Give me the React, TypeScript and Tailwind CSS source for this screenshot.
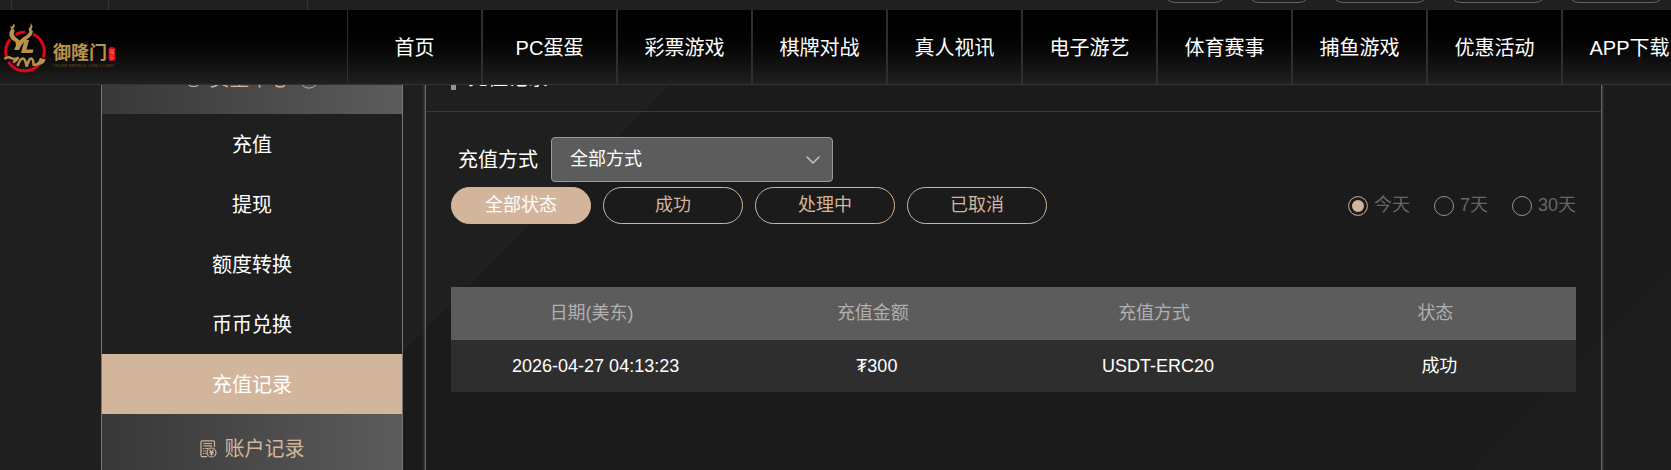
import React, { useState } from 'react';
import { CircleChevronUp, ChevronDown, CircleDollarSign } from 'lucide-react';

const navItems = ['首页', 'PC蛋蛋', '彩票游戏', '棋牌对战', '真人视讯', '电子游艺', '体育赛事', '捕鱼游戏', '优惠活动', 'APP下载'];
const fundItems = ['充值', '提现', '额度转换', '币币兑换', '充值记录'];
const statuses = ['全部状态', '成功', '处理中', '已取消'];
const ranges = ['今天', '7天', '30天'];
const records = [
  { date: '2026-04-27 04:13:23', amount: '₮300', method: 'USDT-ERC20', status: '成功' },
];

const Logo: React.FC = () => (
  <svg width="120" height="60" viewBox="0 0 120 60" fill="none" aria-label="御隆门">
    {/* broken red ring */}
    <g stroke="#e0061a" strokeWidth="3">
      <path d="M15.500 16.500A19.300 19.300 0 0 1 25 14.200" />
      <path d="M33 16A19.300 19.300 0 0 1 43.300 39.500" />
      <path d="M10 21.500A19.300 19.300 0 0 0 6.500 39" />
      <path d="M8.500 44A19.300 19.300 0 0 0 39.500 46" />
    </g>
    {/* dragon monogram */}
    <g fill="#b9934c">
      <path d="M14 5.500L15 8L13.200 10.500L14.600 13L13.600 16L15.500 19L19.500 22.500L22.500 20L27.500 16.500L29.300 14L28.600 11L30.500 8L31 5L32.600 8.500L31.400 11.500L33 13.500L31.500 17.500L28 20.500L24 24L21 28L19 32L14 32L16 27.500L15.500 24L11.500 21.500L9.300 17.500L9.500 14L11.300 11L10 8.500L12.300 8.500Z" />
      <path d="M24.500 22L29 22L26.500 31.500L33.500 31.500L32.500 35L21 35Z" />
    </g>
    <path d="M4.500 41Q8 38 11 40T18.500 39.500Q16 43 13 44.500M17.500 48Q20.500 40 23 40.500T26.500 48.500Q29.500 39.500 31.500 40.500T33.500 46.500Q38 48 40.500 42M39 45.500Q43 45.500 44.500 41M39.500 41L43 42.500" stroke="#b9934c" strokeWidth="2.500" />
    <text x="53" y="41" fontSize="18" fontWeight="700" fill="#b9934c">御隆门</text>
    <text x="53" y="49" fontSize="4" fill="#6b5730" fontFamily="Liberation Serif, serif">GRAND IMPERIAL GATE CASINO</text>
    <rect x="108.500" y="29" width="6.500" height="14" rx="2.500" fill="#e0061a" />
    <text x="109.500" y="35" fontSize="5" fill="#d99a72">娱</text>
    <text x="109.500" y="41" fontSize="5" fill="#d99a72">乐</text>
  </svg>
);

const RecordIcon: React.FC = () => (
  <svg width="17" height="18" viewBox="0 0 17 18" fill="none" stroke="#d2b59b" strokeWidth="1.200">
    <path d="M7 16.700H2.200Q1 16.700 1 15.500V2Q1 .8 2.200 .8H13.300Q14.500 .8 14.500 2V7" />
    <path d="M3.500 3.500H12M3.500 5.800H12M3 8.500H4.500M5.500 8.500H8M3 11H4.500M5.200 11H6.500M3 13.500H4.500M5.200 13.500H6.500" />
    <circle cx="11.500" cy="12.500" r="4.500" />
    <path d="M9.500 9.800L11.500 12.200L13.500 9.800M11.500 12.200V15.500M9.500 12.400H13.500M9.500 14H13.500" />
  </svg>
);

const App: React.FC = () => {
  const [active, setActive] = useState('充值记录');
  const [status, setStatus] = useState('全部状态');
  const [range, setRange] = useState('今天');

  return (
    <div className="h-screen overflow-hidden bg-[linear-gradient(135deg,#1f1f1f_534px,#1b1b1b_534px,#1b1b1b_1374px,#1d1d1d_1374px)] font-['Liberation_Sans','Noto_Sans_CJK_SC',sans-serif] text-white">
      <header className="relative z-10">
        {/* Utility bar */}
        <div className="flex h-[10px] items-end justify-between overflow-hidden bg-[#202020] pr-[6px]">
          <div className="flex h-full">
            <div className="w-3 border-r border-[#333]"></div>
            <div className="w-[97px] border-r border-[#333]"></div>
            <div className="w-[199px] border-r border-[#333]"></div>
          </div>
          <div className="flex gap-5 pb-[7px]">
            <div className="h-6 w-16 rounded-xl border border-[#666]"></div>
            <div className="h-6 w-16 rounded-xl border border-[#666]"></div>
            <div className="h-6 w-[98px] rounded-xl border border-[#666]"></div>
            <div className="h-6 w-[98px] rounded-xl border border-[#666]"></div>
            <div className="h-6 w-[98px] rounded-xl border border-[#666]"></div>
          </div>
        </div>

        {/* Main navigation */}
        <div className="flex h-[75px] overflow-hidden border-b border-[#333] bg-linear-to-b from-black to-[#202020]">
          <div className="w-[348px] shrink-0 border-r border-[#2e2e2e] pt-2">
            <Logo />
          </div>
          <nav className="flex">
            {navItems.map((item) => (
              <a
                key={item}
                href="#"
                className="flex w-[135px] shrink-0 items-center justify-center border-r-2 border-[#2e2e2e] pt-0.5 text-[20px] whitespace-nowrap"
              >
                {item}
              </a>
            ))}
          </nav>
        </div>
      </header>

      {/* Content is scrolled partly under the header */}
      <div className="-mt-[41px] flex min-h-full gap-[22px] pr-[69px] pl-[101px]">
        <aside className="w-[302px] shrink-0 border-x border-[#777]">
          <div className="flex h-[70px] items-center justify-center gap-2 bg-linear-to-r from-[#383838] to-[#5c5c5c] text-[20px] text-[#d2b59b]">
            <CircleDollarSign size={17} strokeWidth={1.5} />
            <span>资金中心</span>
            <CircleChevronUp size={22} strokeWidth={1} />
          </div>
          <nav className="flex flex-col">
            {fundItems.map((item) => (
              <button
                key={item}
                onClick={() => setActive(item)}
                className={`h-[60px] pt-0.5 text-[20px] ${active === item ? 'bg-[#d2b59b]' : ''}`}
              >
                {item}
              </button>
            ))}
          </nav>
          <div className="flex h-[70px] items-center justify-center gap-2 bg-linear-to-r from-[#383838] to-[#5c5c5c] text-[20px] text-[#d2b59b]">
            <RecordIcon />
            <span>账户记录</span>
          </div>
        </aside>

        <main className="min-w-0 flex-1 border-x border-[#666] shadow-[0_0_3px_#666]">
          <div className="flex h-[68px] items-center gap-3 border-b border-[#3a3933] px-[25px]">
            <div className="h-[25px] w-[5px] bg-[#a78f7b]"></div>
            <h1 className="text-[20px]">充值记录</h1>
          </div>

          <div className="px-[25px] pt-[25px]">
            <div className="flex items-center gap-[13px] pl-[7px]">
              <label htmlFor="method" className="text-[20px]">充值方式</label>
              <div className="grid w-[282px] items-center">
                <select
                  id="method"
                  className="col-start-1 row-start-1 h-[45px] w-full appearance-none rounded border border-[#999] bg-[#5c5c5c] px-[18px] text-[18px]"
                >
                  <option>全部方式</option>
                </select>
                <ChevronDown
                  size={24}
                  strokeWidth={1.5}
                  className="pointer-events-none col-start-1 row-start-1 mr-2 justify-self-end text-[#c0c4cc]"
                />
              </div>
            </div>

            <div className="mt-[5px] flex items-center justify-between">
              <div className="flex gap-3">
                {statuses.map((item) => (
                  <button
                    key={item}
                    onClick={() => setStatus(item)}
                    className={`h-[37px] w-[140px] rounded-full border border-[#d2b59b] pb-0.5 text-[18px] leading-none ${
                      status === item ? 'bg-[#d2b59b] text-white' : 'text-[#d2b59b]'
                    }`}
                  >
                    {item}
                  </button>
                ))}
              </div>
              <div className="flex gap-6 text-[18px] text-[#666]">
                {ranges.map((item) => (
                  <label key={item} className="flex items-center gap-1.5">
                    <input
                      type="radio"
                      name="range"
                      checked={range === item}
                      onChange={() => setRange(item)}
                      className="size-5 appearance-none rounded-full border border-[#919191] checked:bg-[#d2b59b] checked:shadow-[inset_0_0_0_3px_#1b1b1b]"
                    />
                    {item}
                  </label>
                ))}
              </div>
            </div>

            <table className="mt-[63px] w-full table-fixed text-center text-[18px]">
              <thead className="bg-[#5c5c5c] text-[#b0b0b0]">
                <tr className="h-[53px]">
                  <th className="font-normal">日期(美东)</th>
                  <th className="font-normal">充值金额</th>
                  <th className="font-normal">充值方式</th>
                  <th className="font-normal">状态</th>
                </tr>
              </thead>
              <tbody className="bg-[#2e2e2e]">
                {records.map((r) => (
                  <tr key={r.date} className="h-[52px]">
                    <td className="pl-2">{r.date}</td>
                    <td className="pl-2">{r.amount}</td>
                    <td className="pl-2">{r.method}</td>
                    <td className="pl-2">{r.status}</td>
                  </tr>
                ))}
              </tbody>
            </table>
          </div>
        </main>
      </div>
    </div>
  );
};

export default App;
